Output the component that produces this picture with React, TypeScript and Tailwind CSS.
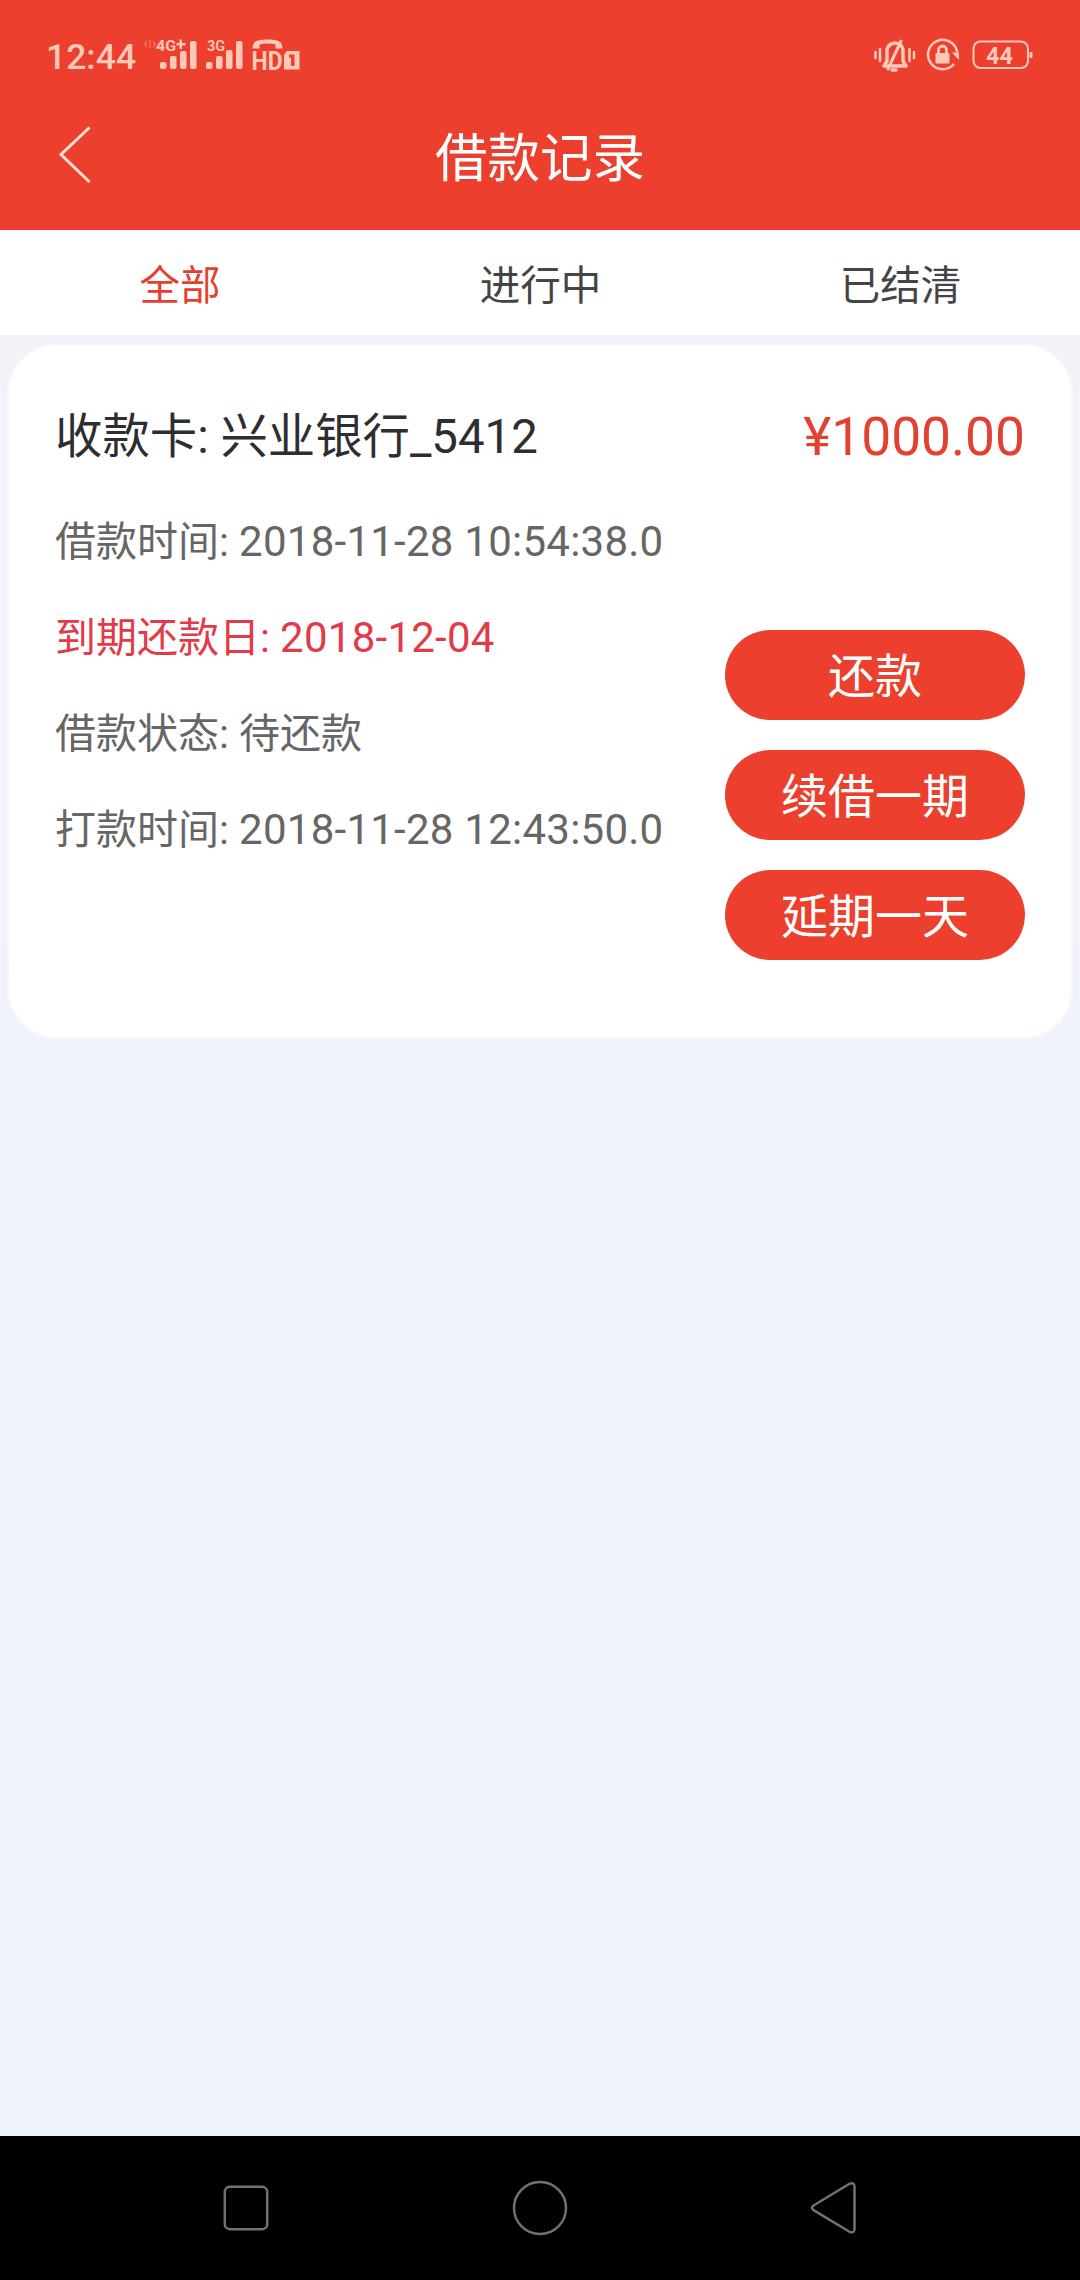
import React from "react";

const tabs = [
  { label: "全部", active: true },
  { label: "进行中", active: false },
  { label: "已结清", active: false },
];

const details = [
  { label: "借款时间", value: "2018-11-28 10:54:38.0", due: false },
  { label: "到期还款日", value: "2018-12-04", due: true },
  { label: "借款状态", value: "待还款", due: false },
  { label: "打款时间", value: "2018-11-28 12:43:50.0", due: false },
];

const actions = ["还款", "续借一期", "延期一天"];

function SignalIcons() {
  return (
    <svg width="160" height="40" viewBox="0 0 160 40" fill="currentColor" className="ml-[6px]">
      {/* faint activity mark */}
      <g opacity="0.25">
        <path d="M0 9l4-4v8zM6 5h2v8H6zM10 5l4 4-4 4z" />
      </g>
      <text x="13" y="16" fontSize="15" fontWeight="700" textLength="20" lengthAdjust="spacingAndGlyphs">4G</text>
      <path d="M33.500 8h3V4.500H39V8h3.500v2.500H39V14h-2.500v-3.500h-3z" />
      <rect x="17" y="27" width="6.5" height="7" rx="2" />
      <rect x="27" y="21" width="6.5" height="13" rx="2" />
      <rect x="37" y="16" width="6.5" height="18" rx="2" />
      <rect x="47" y="6" width="6.5" height="28" rx="2" />
      <text x="64" y="16" fontSize="14.500" fontWeight="600">3G</text>
      <rect x="63" y="27" width="6.5" height="7" rx="2" />
      <rect x="73" y="21" width="6.5" height="13" rx="2" />
      <rect x="83" y="15" width="6.5" height="19" rx="2" />
      <rect x="93" y="6" width="6.5" height="28" rx="2" />
      <path d="M109.500 13.500c0-7 4-9 15-9s15 2 15 9h-7v-4c-5-1.500-11-1.500-16 0v4z" />
      <text x="108.500" y="34.500" fontSize="25" fontWeight="700" textLength="31" lengthAdjust="spacingAndGlyphs">HD</text>
      <path fillRule="evenodd" d="M144 16h12.500v18.500H141V20zM146 19.500v3h2V31h3.500V19.500z" />
    </svg>
  );
}

function SilentIcon() {
  return (
    <svg width="42" height="36" viewBox="0 0 42 36" fill="none" stroke="currentColor" strokeLinecap="round">
      <path strokeWidth="2.500" d="M1.500 15v6M6 12v12M35.500 12v12M40 15v6" />
      <path strokeWidth="3.500" strokeLinejoin="round" d="M10 29h22l-3-5V14c0-5-4-8-8-8s-8 3-8 8v10zM18 33h4" />
      <path strokeWidth="3" d="M27 4L14 32" />
    </svg>
  );
}

function RotationLockIcon() {
  return (
    <svg width="34" height="34" viewBox="0 0 34 34" fill="none" stroke="currentColor">
      <path strokeWidth="2.500" d="M28 26A14.700 14.700 0 1 1 31.200 14" />
      <path fill="currentColor" stroke="none" d="M26 14.500h7V22z" />
      <rect x="9.500" y="15" width="14" height="10.500" rx="1" fill="currentColor" stroke="none" />
      <path strokeWidth="2.800" d="M12.500 15v-3a4 4 0 0 1 8 0v3" />
    </svg>
  );
}

function BatteryIcon() {
  return (
    <svg width="62" height="30" viewBox="0 0 62 30" fill="none" stroke="currentColor">
      <rect x="1.500" y="1.500" width="54.500" height="26.500" rx="7" strokeWidth="2" />
      <rect x="57.500" y="12" width="3" height="6" rx="1" fill="currentColor" stroke="none" />
      <text x="27.500" y="23.500" fontSize="23.500" fontWeight="700" textAnchor="middle" fill="currentColor" stroke="none">44</text>
    </svg>
  );
}

export default function App() {
  return (
    <div className="flex h-[2280px] w-[1080px] flex-col overflow-hidden bg-[#eff3fc] font-['Roboto','Noto_Sans_CJK_SC',sans-serif]">
      <header className="flex h-[230px] flex-col border-b border-[#e2364a] bg-[#ec3f2e]">
        <div className="flex h-[110px] items-center justify-between pl-[46px] pr-[46px] text-[#ffc9ba]">
          <div className="flex items-center">
            <span className="w-[91px] pt-[3px] text-[35.5px] font-medium leading-[40px]">12:44</span>
            <SignalIcons />
          </div>
          <div className="flex items-center">
            <SilentIcon />
            <span className="w-[10px]" />
            <RotationLockIcon />
            <span className="w-[12px]" />
            <BatteryIcon />
          </div>
        </div>
        <div className="grid h-[90px] grid-cols-3 items-center">
          <button aria-label="返回" className="ml-[57px] justify-self-start text-[#ffe0d2]">
            <svg width="36" height="60" viewBox="0 0 36 60" fill="none" stroke="currentColor" strokeWidth="3">
              <path d="M32.500 2.500L4 29.500l28.500 27.500" />
            </svg>
          </button>
          <h1 className="pt-[8px] text-center text-[52.5px] leading-[60px] text-white">借款记录</h1>
        </div>
      </header>

      <nav className="grid h-[105px] grid-cols-3 bg-white">
        {tabs.map((t) => (
          <button
            key={t.label}
            className={
              t.active
                ? "pt-[8px] text-[40.5px] leading-[97px] text-[#e4402f]"
                : "pt-[8px] pl-[1px] text-[40.5px] leading-[97px] text-[#444444]"
            }
          >
            {t.label}
          </button>
        ))}
      </nav>

      <main className="flex-1 bg-[linear-gradient(#f2f2f9_0px,#f2f2f9_600px,#eff3fc_710px)] px-[9px] pt-[10px]">
        <section className="h-[692px] rounded-[48px] bg-white px-[46px] pt-[57px] shadow-[0_1px_5px_rgba(255,255,255,0.9)]">
          <div className="flex h-[70px] items-center justify-between">
            <h2 className="text-[47.4px] leading-[70px] text-[#2e2e32]">收款卡: 兴业银行_5412</h2>
            <span className="text-[53.3px] leading-[70px] text-[#e4402f]">¥1000.00</span>
          </div>
          <div className="flex justify-between">
            <ul className="pt-[22px]">
              {details.map((d) => (
                <li
                  key={d.label}
                  className={
                    d.due
                      ? "h-[96px] text-[41px] leading-[96px] text-[#e23a48]"
                      : "h-[96px] text-[41px] leading-[96px] text-[#666666]"
                  }
                >
                  {d.label}:{" "}
                  <span className={/\d/.test(d.value) ? "text-[42px] tracking-[0.25px]" : ""}>{d.value}</span>
                </li>
              ))}
            </ul>
            <div className="flex flex-col gap-[30px] pt-[158px]">
              {actions.map((a) => (
                <button key={a} className="h-[90px] w-[300px] rounded-full bg-[#ec3f2e] pt-[4px] text-[47px] leading-[86px] text-white">
                  {a}
                </button>
              ))}
            </div>
          </div>
        </section>
      </main>

      <footer className="flex h-[144px] items-center justify-between bg-black pl-[223px] pr-[222px] text-[#747172]">
        <svg width="46" height="46" viewBox="0 0 46 46" fill="none" stroke="currentColor" strokeWidth="2.500">
          <rect x="1.800" y="1.800" width="42.400" height="42.400" rx="5" />
        </svg>
        <svg width="56" height="56" viewBox="0 0 56 56" fill="none" stroke="currentColor" strokeWidth="2.500">
          <circle cx="28" cy="28" r="26" />
        </svg>
        <svg width="48" height="54" viewBox="0 0 48 54" fill="none" stroke="currentColor" strokeWidth="2.500" strokeLinejoin="round">
          <path d="M39.500 2.800L3.500 24.500q-3 2.300 0 4.600L39.500 50.800q5 2 5-3V5.800q0-5-5-3z" />
        </svg>
      </footer>
    </div>
  );
}
